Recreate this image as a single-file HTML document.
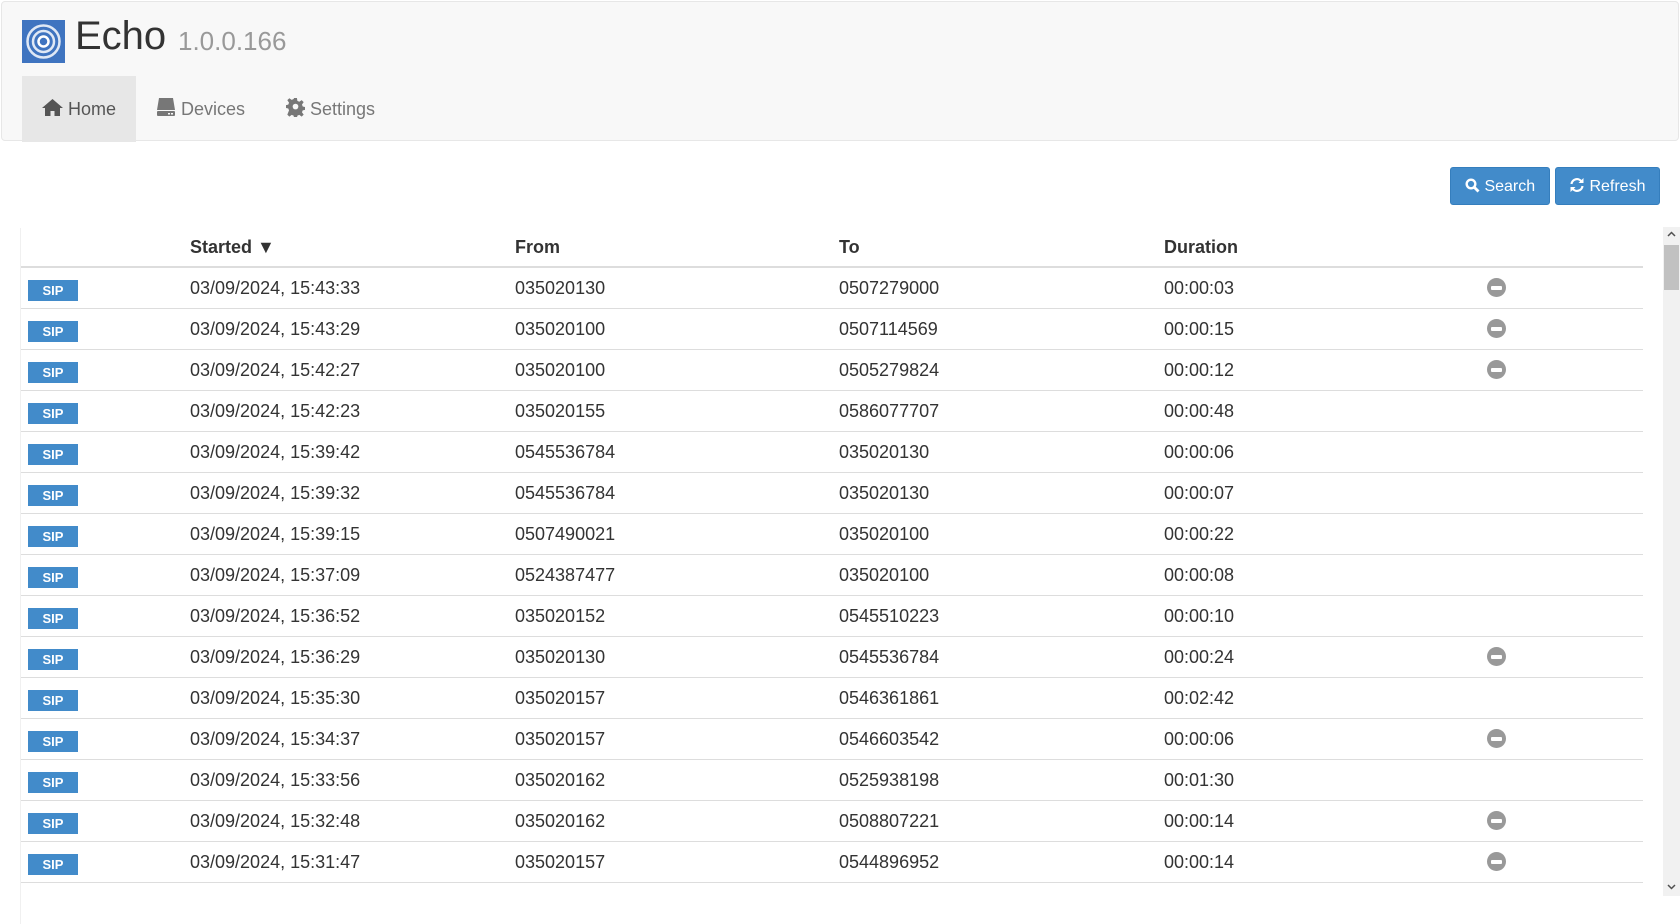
<!DOCTYPE html>
<html><head><meta charset="utf-8"><style>
*{box-sizing:border-box;margin:0;padding:0}
body{width:1680px;height:896px;overflow:hidden;background:#fff;font-family:"Liberation Sans",Arial,sans-serif;color:#333;position:relative}
.nav{position:absolute;left:1px;top:1px;width:1678px;height:140px;background:#f8f8f8;border:1px solid #e7e7e7;border-radius:4px}
.logo{position:absolute;left:20px;top:18px;width:43px;height:43px;background:#3f74c0}
.title{position:absolute;left:73px;top:12px;font-size:40px;color:#333}
.ver{position:absolute;left:176px;top:24px;font-size:26px;color:#999}
.tab{position:absolute;top:74px;height:66px;font-size:18px;color:#777;line-height:66px;padding-left:20px}
.btn{position:absolute;top:167px;height:38px;background:#428bca;border:1px solid #357ebd;border-radius:3px;color:#fff;font-size:16px;line-height:38px;padding-left:14px}
.tbl{position:absolute;left:20px;top:228px;width:1623px;border-left:1px solid #f0f0f0}
.hd{height:40px;border-bottom:2px solid #ddd;position:relative;font-weight:bold;font-size:18px}
.r{height:41px;border-bottom:1px solid #ddd;position:relative;font-size:18px}
.c{position:absolute;top:0;line-height:40px}
.hd .c{line-height:38px}
.sip{position:absolute;left:7px;top:12px;width:50px;height:21px;background:#428bca;color:#fff;font-size:13px;font-weight:bold;text-align:center;line-height:21px}
.m{position:absolute;left:1466px;top:10px;width:19px;height:19px;border-radius:50%;background:#999}
.m:after{content:"";position:absolute;left:4px;top:7.5px;width:11px;height:4px;background:#fff;border-radius:1px}
.sb{position:absolute;left:1663px;top:227px;width:17px;height:669px;background:#f1f1f1}
.th{position:absolute;left:1px;top:18px;width:15px;height:45px;background:#c1c1c1}
</style></head><body>
<div class="nav">
<div class="logo"><svg width="43" height="43" viewBox="0 0 43 43"><circle cx="21.5" cy="21.5" r="16" fill="none" stroke="#dfe8f5" stroke-width="2.5"/><circle cx="21.5" cy="21.5" r="10.5" fill="none" stroke="#dfe8f5" stroke-width="2.5"/><circle cx="21.5" cy="21.5" r="5" fill="none" stroke="#fff" stroke-width="2.5"/></svg></div>
<div class="title">Echo</div><div class="ver">1.0.0.166</div>
<div class="tab" style="left:20px;width:114px;background:#e7e7e7;color:#555"><svg width="21" height="17" viewBox="0 0 21 17" style="vertical-align:-1px"><path d="M10.5 0L0 9h3v8h5.5v-5h4v5H18V9h3z" fill="#555"/></svg> Home</div>
<div class="tab" style="left:134px;width:120px"><svg width="20" height="18" viewBox="0 0 20 18" style="vertical-align:-1px"><path d="M3 0h14l2 12H1z" fill="#777"/><rect x="1" y="13" width="18" height="5" rx="1" fill="#777"/><rect x="12" y="15" width="2" height="1.5" fill="#f8f8f8"/><rect x="15" y="15" width="2" height="1.5" fill="#f8f8f8"/></svg> Devices</div>
<div class="tab" style="left:264px;width:130px"><svg width="19" height="19" viewBox="0 0 20 20" style="vertical-align:-2px"><path d="M8.5 0h3l.5 3 2 1 2.5-1.8 2.1 2.1L16.8 7l.8 2 2.4.5v3l-2.4.5-.8 2 1.8 2.5-2.1 2.1-2.5-1.8-2 .8-.5 2.4h-3l-.5-2.4-2-.8-2.5 1.8-2.1-2.1L3.2 13l-.8-2L0 10.5v-3l2.4-.5.8-2L1.4 2.3 3.5.2 6 2l2-1z" fill="#777"/><circle cx="10" cy="9" r="3" fill="#f8f8f8"/></svg> Settings</div>
</div>
<div class="btn" style="left:1450px;width:100px"><svg width="15" height="15" viewBox="0 0 15 15" style="vertical-align:-2px"><circle cx="6" cy="6" r="4.3" fill="none" stroke="#fff" stroke-width="2.4"/><path d="M9 9l4.5 4.5" stroke="#fff" stroke-width="2.8"/></svg> Search</div>
<div class="btn" style="left:1555px;width:105px;padding-left:13px"><svg width="16" height="16" viewBox="0 0 16 16" style="vertical-align:-2px"><path d="M2.5 7A5.5 5.5 0 0 1 12.5 4.5M13.5 9A5.5 5.5 0 0 1 3.5 11.5" fill="none" stroke="#fff" stroke-width="2.2"/><path d="M14.5 1v5h-5zM1.5 15v-5h5z" fill="#fff"/></svg> Refresh</div>
<div class="tbl">
<div class="hd"><span class="c" style="left:169px">Started ▼</span><span class="c" style="left:494px">From</span><span class="c" style="left:818px">To</span><span class="c" style="left:1143px">Duration</span></div>
<div class="r"><span class="sip">SIP</span><span class="c" style="left:169px">03/09/2024, 15:43:33</span><span class="c" style="left:494px">035020130</span><span class="c" style="left:818px">0507279000</span><span class="c" style="left:1143px">00:00:03</span><span class="m"></span></div>
<div class="r"><span class="sip">SIP</span><span class="c" style="left:169px">03/09/2024, 15:43:29</span><span class="c" style="left:494px">035020100</span><span class="c" style="left:818px">0507114569</span><span class="c" style="left:1143px">00:00:15</span><span class="m"></span></div>
<div class="r"><span class="sip">SIP</span><span class="c" style="left:169px">03/09/2024, 15:42:27</span><span class="c" style="left:494px">035020100</span><span class="c" style="left:818px">0505279824</span><span class="c" style="left:1143px">00:00:12</span><span class="m"></span></div>
<div class="r"><span class="sip">SIP</span><span class="c" style="left:169px">03/09/2024, 15:42:23</span><span class="c" style="left:494px">035020155</span><span class="c" style="left:818px">0586077707</span><span class="c" style="left:1143px">00:00:48</span></div>
<div class="r"><span class="sip">SIP</span><span class="c" style="left:169px">03/09/2024, 15:39:42</span><span class="c" style="left:494px">0545536784</span><span class="c" style="left:818px">035020130</span><span class="c" style="left:1143px">00:00:06</span></div>
<div class="r"><span class="sip">SIP</span><span class="c" style="left:169px">03/09/2024, 15:39:32</span><span class="c" style="left:494px">0545536784</span><span class="c" style="left:818px">035020130</span><span class="c" style="left:1143px">00:00:07</span></div>
<div class="r"><span class="sip">SIP</span><span class="c" style="left:169px">03/09/2024, 15:39:15</span><span class="c" style="left:494px">0507490021</span><span class="c" style="left:818px">035020100</span><span class="c" style="left:1143px">00:00:22</span></div>
<div class="r"><span class="sip">SIP</span><span class="c" style="left:169px">03/09/2024, 15:37:09</span><span class="c" style="left:494px">0524387477</span><span class="c" style="left:818px">035020100</span><span class="c" style="left:1143px">00:00:08</span></div>
<div class="r"><span class="sip">SIP</span><span class="c" style="left:169px">03/09/2024, 15:36:52</span><span class="c" style="left:494px">035020152</span><span class="c" style="left:818px">0545510223</span><span class="c" style="left:1143px">00:00:10</span></div>
<div class="r"><span class="sip">SIP</span><span class="c" style="left:169px">03/09/2024, 15:36:29</span><span class="c" style="left:494px">035020130</span><span class="c" style="left:818px">0545536784</span><span class="c" style="left:1143px">00:00:24</span><span class="m"></span></div>
<div class="r"><span class="sip">SIP</span><span class="c" style="left:169px">03/09/2024, 15:35:30</span><span class="c" style="left:494px">035020157</span><span class="c" style="left:818px">0546361861</span><span class="c" style="left:1143px">00:02:42</span></div>
<div class="r"><span class="sip">SIP</span><span class="c" style="left:169px">03/09/2024, 15:34:37</span><span class="c" style="left:494px">035020157</span><span class="c" style="left:818px">0546603542</span><span class="c" style="left:1143px">00:00:06</span><span class="m"></span></div>
<div class="r"><span class="sip">SIP</span><span class="c" style="left:169px">03/09/2024, 15:33:56</span><span class="c" style="left:494px">035020162</span><span class="c" style="left:818px">0525938198</span><span class="c" style="left:1143px">00:01:30</span></div>
<div class="r"><span class="sip">SIP</span><span class="c" style="left:169px">03/09/2024, 15:32:48</span><span class="c" style="left:494px">035020162</span><span class="c" style="left:818px">0508807221</span><span class="c" style="left:1143px">00:00:14</span><span class="m"></span></div>
<div class="r"><span class="sip">SIP</span><span class="c" style="left:169px">03/09/2024, 15:31:47</span><span class="c" style="left:494px">035020157</span><span class="c" style="left:818px">0544896952</span><span class="c" style="left:1143px">00:00:14</span><span class="m"></span></div>
<div class="r" style="border:0"></div>
</div>
<div class="sb"><div class="th"></div><svg style="position:absolute;left:4px;top:4px" width="9" height="6" viewBox="0 0 9 6"><path d="M1 5l3.5-3.5L8 5" fill="none" stroke="#505050" stroke-width="1.5"/></svg><svg style="position:absolute;left:4px;top:657px" width="9" height="6" viewBox="0 0 9 6"><path d="M1 1l3.5 3.5L8 1" fill="none" stroke="#505050" stroke-width="1.5"/></svg></div>
</body></html>
